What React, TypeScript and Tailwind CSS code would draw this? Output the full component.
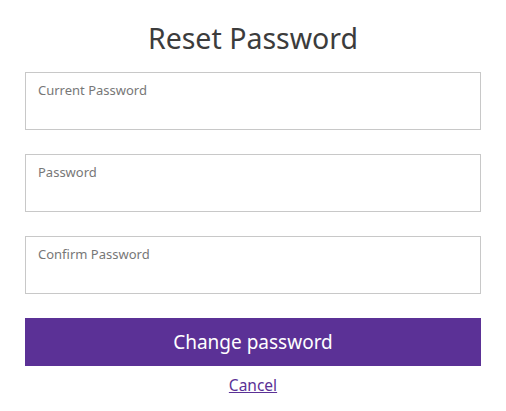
export default function App() {
	const fields = ["Current Password", "Password", "Confirm Password"];

	return (
		<div className="min-h-screen bg-white px-[25px] pt-[20px] font-['Noto_Sans',sans-serif]">
			<h1 className="text-center text-[28.5px] leading-[36px] text-[#3c3c3c]">
				Reset Password
			</h1>
			<form className="mt-[16px] flex flex-col gap-[24px]">
				{fields.map((label) => (
					<label
						key={label}
						className="flex h-[58px] flex-col border border-[#c8c8c8] px-[12px] pt-[8px]"
					>
						<span className="text-[13px] leading-[18px] text-[#777]">
							{label}
						</span>
						<input type="password" className="outline-none" />
					</label>
				))}
				<button
					type="button"
					className="h-[48px] bg-[#5b3196] text-[19px] text-white"
				>
					Change password
				</button>
			</form>
			<div className="mt-[7px] text-center">
				<a href="#" className="text-[15.5px] text-[#5b3196] underline">
					Cancel
				</a>
			</div>
		</div>
	);
}
